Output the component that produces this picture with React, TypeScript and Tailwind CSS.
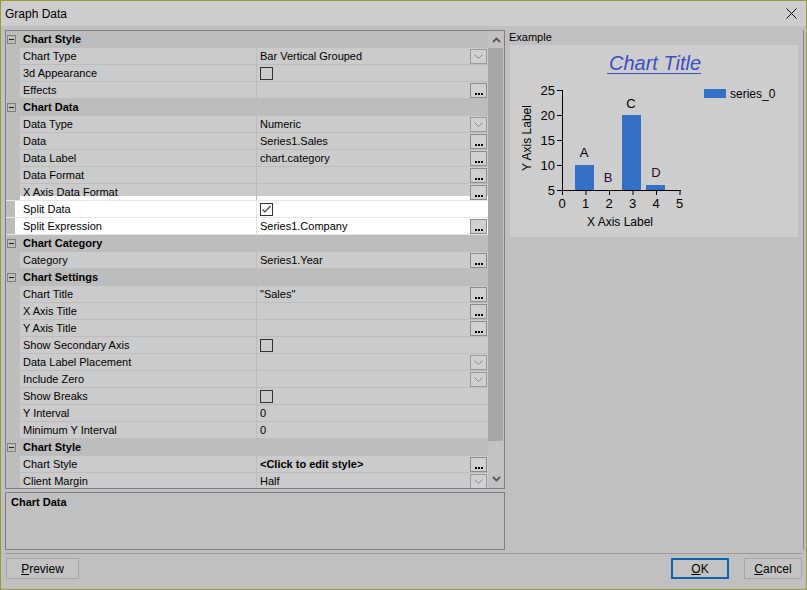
import type { ReactNode } from "react";

type Kind = "text" | "dropdown" | "ellipsis" | "check" | "checked";

type Item =
  | { cat: string }
  | { name: string; value?: string; kind?: Kind; bold?: boolean; hl?: boolean; edge?: boolean };

const items: Item[] = [
  { cat: "Chart Style" },
  { name: "Chart Type", value: "Bar Vertical Grouped", kind: "dropdown" },
  { name: "3d Appearance", kind: "check" },
  { name: "Effects", kind: "ellipsis" },
  { cat: "Chart Data" },
  { name: "Data Type", value: "Numeric", kind: "dropdown" },
  { name: "Data", value: "Series1.Sales", kind: "ellipsis" },
  { name: "Data Label", value: "chart.category", kind: "ellipsis" },
  { name: "Data Format", kind: "ellipsis" },
  { name: "X Axis Data Format", kind: "ellipsis", edge: true },
  { name: "Split Data", kind: "checked", hl: true },
  { name: "Split Expression", value: "Series1.Company", kind: "ellipsis", hl: true },
  { cat: "Chart Category" },
  { name: "Category", value: "Series1.Year", kind: "ellipsis" },
  { cat: "Chart Settings" },
  { name: "Chart Title", value: "\"Sales\"", kind: "ellipsis" },
  { name: "X Axis Title", kind: "ellipsis" },
  { name: "Y Axis Title", kind: "ellipsis" },
  { name: "Show Secondary Axis", kind: "check" },
  { name: "Data Label Placement", kind: "dropdown" },
  { name: "Include Zero", kind: "dropdown" },
  { name: "Show Breaks", kind: "check" },
  { name: "Y Interval", value: "0" },
  { name: "Minimum Y Interval", value: "0" },
  { cat: "Chart Style" },
  { name: "Chart Style", value: "<Click to edit style>", kind: "ellipsis", bold: true },
  { name: "Client Margin", value: "Half", kind: "dropdown" },
];

function DropButton() {
  return (
    <div className="w-[17px] h-[15px] border border-[#9a9a9a] bg-[#d0d0d0] flex items-center justify-center">
      <svg width="9" height="5" viewBox="0 0 9 5">
        <path d="M0.5 0.5 L4.5 4.5 L8.5 0.5" fill="none" stroke="#8a8a8a" strokeWidth="1" />
      </svg>
    </div>
  );
}

function EllipsisButton() {
  return (
    <div className="w-[17px] h-[15px] border border-[#8c8c8c] bg-[#d0d0d0] flex items-end justify-center gap-[1px] pb-[2px]">
      <div className="w-[2px] h-[2px] bg-black" />
      <div className="w-[2px] h-[2px] bg-black" />
      <div className="w-[2px] h-[2px] bg-black" />
    </div>
  );
}

function CheckBox({ checked }: { checked?: boolean }) {
  return (
    <div className="w-[13px] h-[13px] border border-[#333333] flex items-center justify-center">
      {checked && (
        <svg width="11" height="11" viewBox="0 0 11 11">
          <path d="M1.5 5.5 L4 8 L9.5 2" fill="none" stroke="#444444" strokeWidth="1.2" />
        </svg>
      )}
    </div>
  );
}

function Minus() {
  return (
    <div className="w-[9px] h-[9px] border border-[#808080] flex items-center justify-center">
      <div className="w-[5px] h-[1px] bg-[#202020]" />
    </div>
  );
}

function CategoryRow({ label }: { label: string }) {
  return (
    <div className="flex h-[17px] bg-[#bdbdbd] shrink-0">
      <div className="w-[14px] flex items-center pl-[1px]">
        <Minus />
      </div>
      <div className="pl-[3px] font-bold leading-[16px] text-black">{label}</div>
    </div>
  );
}

function PropRow({ name, value, kind = "text", bold, hl, edge }: Extract<Item, { name: string }>) {
  let control: ReactNode = null;
  if (kind === "dropdown") control = <DropButton />;
  if (kind === "ellipsis") control = <EllipsisButton />;

  let rowBg = "border-[#bdbdbd] bg-[#cbcbcb]";
  let marginBg = "bg-[#bdbdbd]";
  if (hl) {
    rowBg = "border-[#e6e6e6] bg-white";
    marginBg = "bg-[linear-gradient(to_right,#bdbdbd_9px,#ffffff_9px)]";
  } else if (edge) {
    rowBg = "border-[#e6e6e6] bg-[linear-gradient(to_bottom,#cbcbcb_12px,#ffffff_12px)]";
  }

  return (
    <div className={"flex h-[17px] shrink-0 border-b " + rowBg}>
      <div className={"w-[14px] " + marginBg} />
      <div className="w-[236px] pl-[3px] leading-[16px] text-black whitespace-nowrap">{name}</div>
      <div className={"w-[1px] " + (hl ? "bg-[#e6e6e6]" : "bg-[#bdbdbd]")} />
      <div className="flex-1 flex items-center pl-[3px] pr-[1px]">
        {kind === "check" || kind === "checked" ? (
          <CheckBox checked={kind === "checked"} />
        ) : (
          <span className={"leading-[16px] text-black whitespace-nowrap " + (bold ? "font-bold" : "")}>{value}</span>
        )}
        <div className="flex-1" />
        {control}
      </div>
    </div>
  );
}

function ScrollBar() {
  return (
    <div className="w-[16px] bg-[#c2c2c2] flex flex-col items-center">
      <div className="h-[17px] flex items-center justify-center">
        <svg width="9" height="6" viewBox="0 0 9 6">
          <path d="M1 5 L4.5 1.5 L8 5" fill="none" stroke="#555555" strokeWidth="1.8" />
        </svg>
      </div>
      <div className="w-[15px] self-start h-[393px] bg-[#a6a6a6]" />
      <div className="flex-1" />
      <div className="h-[17px] flex items-center justify-center mb-[1px]">
        <svg width="9" height="6" viewBox="0 0 9 6">
          <path d="M1 1 L4.5 4.5 L8 1" fill="none" stroke="#555555" strokeWidth="1.8" />
        </svg>
      </div>
    </div>
  );
}

function Chart() {
  const xs = [0, 1, 2, 3, 4, 5];
  const ys = [25, 20, 15, 10, 5];
  const font = "Liberation Sans, Arial, sans-serif";
  return (
    <svg width="288" height="192" className="block" fontFamily={font}>
      <text x="145" y="25" textAnchor="middle" fontSize="20" fontStyle="italic" fill="#3e4ec4">
        Chart Title
      </text>
      <line x1="97" x2="191" y1="28.5" y2="28.5" stroke="#3e4ec4" />
      <rect x="194" y="44" width="22" height="9" fill="#3470c6" />
      <text x="220" y="53" fontSize="12" fill="#000">
        series_0
      </text>
      <rect x="65" y="120" width="19" height="25" fill="#3470c6" />
      <rect x="112" y="70" width="19" height="75" fill="#3470c6" />
      <rect x="136" y="140" width="19" height="5" fill="#3470c6" />
      <line x1="52.5" x2="52.5" y1="45" y2="145" stroke="#000" />
      <line x1="52" x2="171" y1="145.5" y2="145.5" stroke="#000" />
      {ys.map((v) => {
        const y = 145 - (v - 5) * 5;
        return (
          <g key={v}>
            <line x1="47" x2="52" y1={y + 0.5} y2={y + 0.5} stroke="#000" />
            <text x="45" y={y + 5} textAnchor="end" fontSize="13" fill="#000">
              {v}
            </text>
          </g>
        );
      })}
      {xs.map((v) => {
        const x = 52 + v * 23.5;
        return (
          <g key={v}>
            <line x1={x + 0.5} x2={x + 0.5} y1="145" y2="150" stroke="#000" />
            <text x={x} y="163" textAnchor="middle" fontSize="13" fill="#000">
              {v}
            </text>
          </g>
        );
      })}
      <text x="74" y="112" textAnchor="middle" fontSize="13" fill="#000">A</text>
      <text x="98" y="137" textAnchor="middle" fontSize="13" fill="#2a0a3a">B</text>
      <text x="121" y="63" textAnchor="middle" fontSize="13" fill="#000">C</text>
      <text x="146" y="132" textAnchor="middle" fontSize="13" fill="#2a0a3a">D</text>
      <text x="17" y="93" textAnchor="middle" fontSize="12" fill="#000" transform="rotate(-90 17 93)" dy="4">
        Y Axis Label
      </text>
      <text x="110" y="181" textAnchor="middle" fontSize="12" fill="#000">
        X Axis Label
      </text>
    </svg>
  );
}

function Button({ children, focused, className }: { children: ReactNode; focused?: boolean; className?: string }) {
  return (
    <div
      className={
        "h-[21px] flex items-center justify-center text-[12px] text-black bg-[#c3c3c3] " +
        (focused ? "border-2 border-[#0a64b0]" : "border border-[#a8a8a8]") +
        " " +
        (className ?? "")
      }
    >
      {children}
    </div>
  );
}

export default function App() {
  return (
    <div className="w-[807px] h-[590px] border border-[#969a3e] bg-[#c0c0c0] flex flex-col text-[11px] font-['Liberation_Sans',Arial,sans-serif] overflow-hidden">
      <div className="h-[25px] shrink-0 bg-[#cdcdcd] flex items-center pl-[4px] pr-[9px]">
        <span className="text-[12px] text-black">Graph Data</span>
        <div className="flex-1" />
        <svg width="11" height="11" viewBox="0 0 11 11">
          <path d="M0.5 0.5 L10.5 10.5 M10.5 0.5 L0.5 10.5" stroke="#111" strokeWidth="1" />
        </svg>
      </div>

      <div className="flex-1 flex flex-col pl-[4px] pr-[2px]">
        <div className="flex pt-[4px]">
          <div className="w-[500px] flex flex-col gap-[3px]">
            <div className="h-[459px] border border-[#7e7e84] flex overflow-hidden">
              <div className="w-[482px] flex flex-col overflow-hidden">
                {items.map((it, i) =>
                  "cat" in it ? <CategoryRow key={i} label={it.cat} /> : <PropRow key={i} {...it} />
                )}
              </div>
              <ScrollBar />
            </div>
            <div className="h-[58px] border border-[#7e7e84] px-[5px] pt-[1px]">
              <span className="font-bold text-black">Chart Data</span>
            </div>
          </div>

          <div className="w-[299px] h-[520px] border-r border-[#8a8a8a] flex flex-col pl-[4px]">
            <div className="h-[15px] leading-[15px] text-black">Example</div>
            <div className="ml-[1px] w-[288px] h-[192px] bg-[#cdcdcd]">
              <Chart />
            </div>
          </div>
        </div>

        <div className="mt-[3px] w-[798px] h-[1px] bg-[#9a9a9a]" />

        <div className="mt-[4px] flex items-center pl-[1px] pr-[2px]">
          <Button className="w-[73px]">
            <span>
              <span className="underline">P</span>review
            </span>
          </Button>
          <div className="flex-1" />
          <Button focused className="w-[58px]">
            <span>
              <span className="underline">O</span>K
            </span>
          </Button>
          <Button className="w-[58px] ml-[15px]">
            <span>
              <span className="underline">C</span>ancel
            </span>
          </Button>
        </div>
      </div>
    </div>
  );
}
